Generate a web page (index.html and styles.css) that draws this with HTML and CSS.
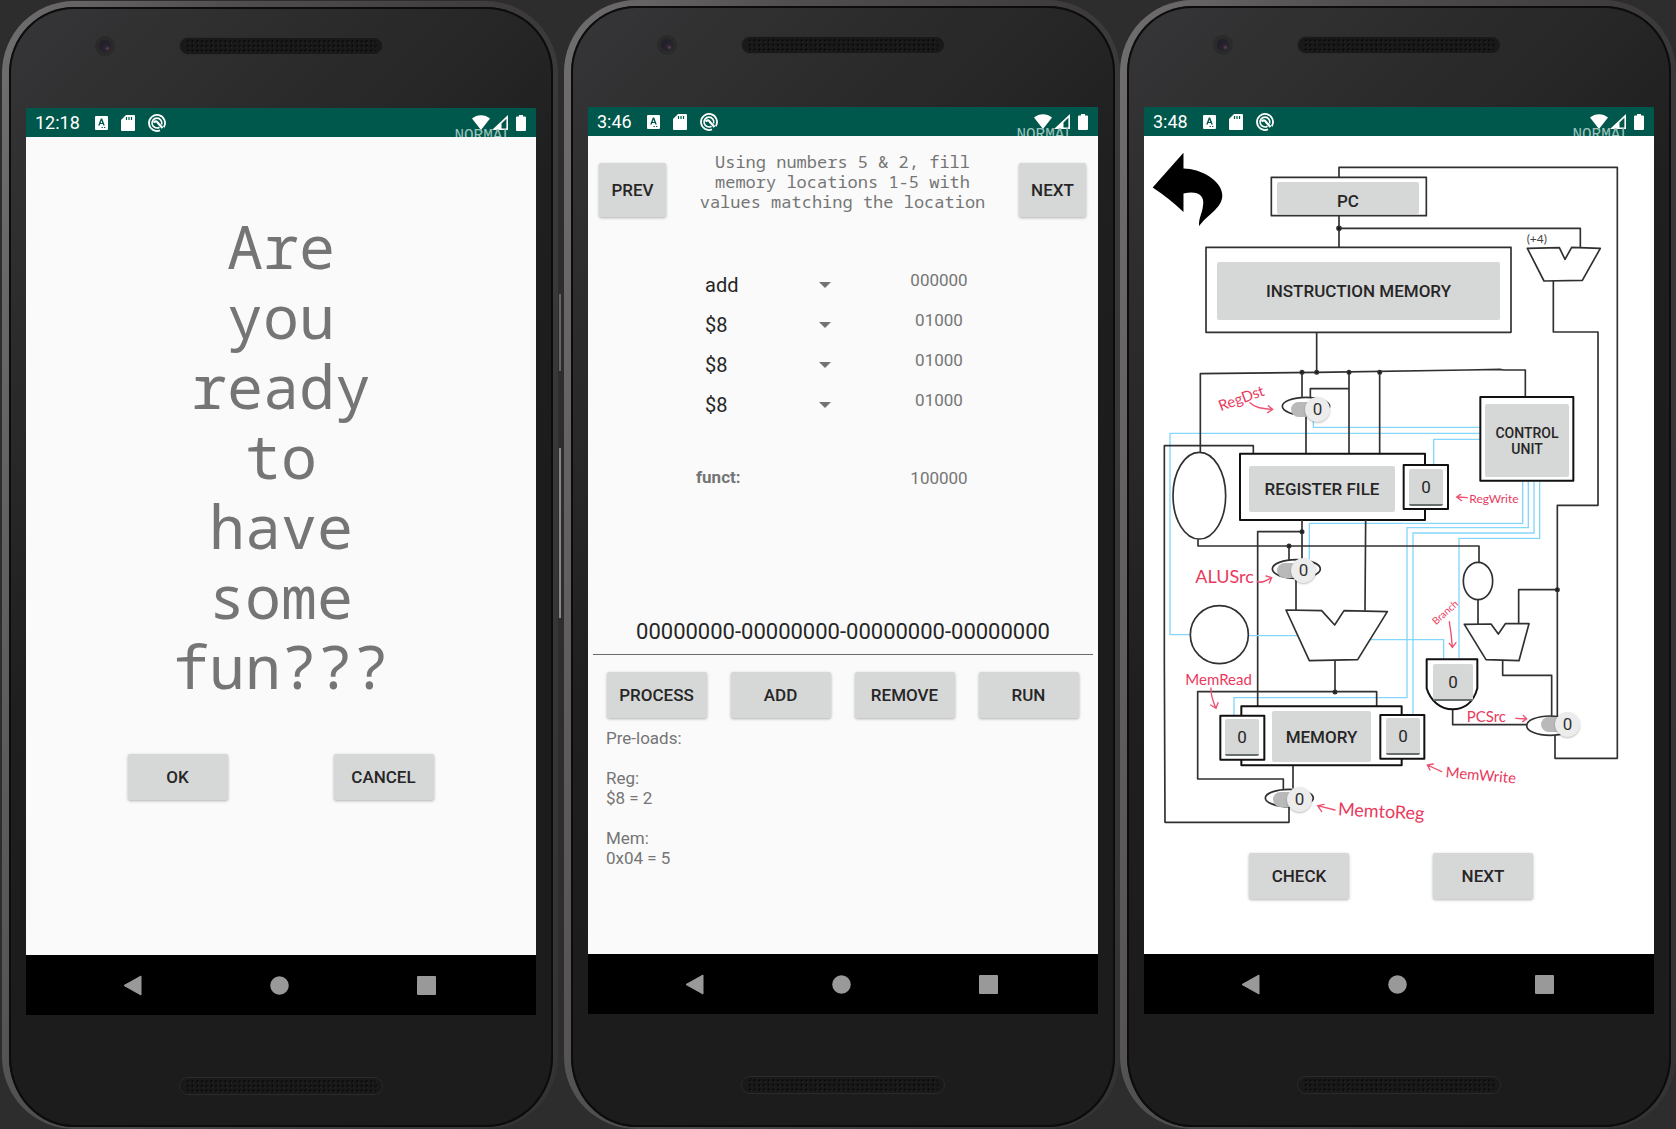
FILE: index.html
```html
<!DOCTYPE html>
<html lang="en">
<head>
<meta charset="utf-8">
<meta name="viewport" content="width=device-width, initial-scale=1">
<title>MIPS trainer</title>
<link rel="stylesheet" href="styles.css">
</head>
<body>
<svg class="defs" aria-hidden="true">
  <defs>
    <pattern id="holes" x="2" y="2" width="4.7" height="4.7" patternUnits="userSpaceOnUse">
      <circle cx="2.3" cy="2.3" r="1.2" fill="#060606"/>
      <circle cx="3.2" cy="3.3" r=".5" fill="#3c3c3c"/>
    </pattern>
    <symbol id="grille" viewBox="0 0 204 18">
      <rect x=".5" y=".5" width="203" height="17" rx="8.5" fill="#191919" stroke="#2b2b2b"/>
      <rect x="6" y="2" width="192" height="14" rx="6" fill="url(#holes)"/>
    </symbol>
    <symbol id="letter-a" viewBox="0 0 13 14">
      <path fill="#fff" fill-rule="evenodd" d="M1 0h11a1 1 0 0 1 1 1v12a1 1 0 0 1-1 1H1a1 1 0 0 1-1-1V1a1 1 0 0 1 1-1zM5.8 2.5 3.2 9.6h1.5l.5-1.500h2.600l.5 1.500h1.500L7.200 2.500zM6.500 4.500l.8 2.400H5.700zM6.500 11v1h1.300v-1zM9 11v1h1.300v-1z"/>
    </symbol>
    <symbol id="sd-card" viewBox="0 0 14 16">
      <path fill="#fff" d="M5 0h8a1 1 0 0 1 1 1v14a1 1 0 0 1-1 1H1a1 1 0 0 1-1-1V5z"/>
      <path stroke="#00574b" stroke-width="1.200" d="M5.500 2v3M8 2v3M10.500 2v3"/>
    </symbol>
    <symbol id="sync-ring" viewBox="0 0 18 18">
      <g fill="none" stroke="#fff">
        <path stroke-width="1.800" d="M12 16.400A8 8 0 1 1 15.800 13.200"/>
        <path stroke-width="1.600" d="M11.500 13.200A4.900 4.900 0 1 1 13.600 10.500"/>
        <path stroke-width="2.200" d="M5.500 8.500Q8.500 6 10 9L14.500 14"/>
      </g>
    </symbol>
    <symbol id="wifi" viewBox="0 0 18 15"><path fill="#fff" d="M9 15 0 3.500C5-1 13-1 18 3.500z"/></symbol>
    <symbol id="signal" viewBox="0 0 16 15"><path fill="#fff" d="M16 0v15H0zM14.400 3.800 9.500 8.500v5h4.900z" fill-rule="evenodd"/></symbol>
    <symbol id="battery" viewBox="0 0 10 16"><path fill="#fff" d="M3 0h4v1.500h2a1 1 0 0 1 1 1V15a1 1 0 0 1-1 1H1a1 1 0 0 1-1-1V2.500a1 1 0 0 1 1-1h2z"/></symbol>
    <symbol id="nav-back" viewBox="0 0 19 21"><path fill="#999" stroke="#999" stroke-linejoin="round" d="M18 1v19L1 10.500z"/></symbol>
    <symbol id="nav-home" viewBox="0 0 19 21"><circle cx="9.500" cy="10.500" r="9.300" fill="#999"/></symbol>
    <symbol id="nav-recent" viewBox="0 0 19 21"><rect y="1" width="19" height="19" rx="1" fill="#999"/></symbol>
  </defs>
</svg>

<main class="stage">
  <section class="phone phone--intro">
    <div class="forehead"><span class="camera"></span><svg class="grille"><use href="#grille"/></svg></div>
    <div class="screen">
      <header class="status">
        <time class="clock">12:18</time>
        <svg width="13" height="14"><use href="#letter-a"/></svg>
        <svg width="14" height="16"><use href="#sd-card"/></svg>
        <svg width="18" height="18"><use href="#sync-ring"/></svg>
        <span class="status-right">
          <svg width="18" height="15"><use href="#wifi"/></svg>
          <svg width="16" height="15"><use href="#signal"/></svg>
          <svg class="battery" width="10" height="16"><use href="#battery"/></svg>
        </span>
        <span class="mode">NORMAL</span>
      </header>
      <div class="app">
        <h1 class="headline">Are<br>you<br>ready<br>to<br>have<br>some<br>fun???</h1>
        <div class="choices">
          <button class="btn" type="button">OK</button>
          <button class="btn" type="button">CANCEL</button>
        </div>
      </div>
      <nav class="navbar">
        <button type="button" aria-label="Back"><svg><use href="#nav-back"/></svg></button>
        <button type="button" aria-label="Home"><svg><use href="#nav-home"/></svg></button>
        <button type="button" aria-label="Recent apps"><svg><use href="#nav-recent"/></svg></button>
      </nav>
    </div>
    <div class="chin"><svg class="grille"><use href="#grille"/></svg></div>
  </section>

  <section class="phone phone--editor">
    <div class="forehead"><span class="camera"></span><svg class="grille"><use href="#grille"/></svg></div>
    <div class="screen">
      <header class="status">
        <time class="clock">3:46</time>
        <svg width="13" height="14"><use href="#letter-a"/></svg>
        <svg width="14" height="16"><use href="#sd-card"/></svg>
        <svg width="18" height="18"><use href="#sync-ring"/></svg>
        <span class="status-right">
          <svg width="18" height="15"><use href="#wifi"/></svg>
          <svg width="16" height="15"><use href="#signal"/></svg>
          <svg class="battery" width="10" height="16"><use href="#battery"/></svg>
        </span>
        <span class="mode">NORMAL</span>
      </header>
      <div class="app">
        <div class="task">
          <button class="btn btn--step" type="button">PREV</button>
          <p class="prompt">Using numbers 5 &amp; 2, fill<br>memory locations 1-5 with<br>values matching the location</p>
          <button class="btn btn--step" type="button">NEXT</button>
        </div>
        <div class="fields">
          <select class="spinner" aria-label="Operation"><option>add</option><option>sub</option></select>
          <output class="bits">000000</output>
          <select class="spinner" aria-label="First register"><option>$8</option><option>$9</option></select>
          <output class="bits">01000</output>
          <select class="spinner" aria-label="Second register"><option>$8</option><option>$9</option></select>
          <output class="bits">01000</output>
          <select class="spinner" aria-label="Destination register"><option>$8</option><option>$9</option></select>
          <output class="bits">01000</output>
          <label class="funct" for="funct">funct:</label>
          <output class="bits bits--funct" id="funct">100000</output>
        </div>
        <input class="word" type="text" aria-label="Machine word" value="00000000-00000000-00000000-00000000">
        <div class="actions">
          <button class="btn" type="button">PROCESS</button>
          <button class="btn" type="button">ADD</button>
          <button class="btn" type="button">REMOVE</button>
          <button class="btn" type="button">RUN</button>
        </div>
        <p class="preloads">Pre-loads:<br><br>Reg:<br>$8 = 2<br><br>Mem:<br>0x04 = 5</p>
      </div>
      <nav class="navbar">
        <button type="button" aria-label="Back"><svg><use href="#nav-back"/></svg></button>
        <button type="button" aria-label="Home"><svg><use href="#nav-home"/></svg></button>
        <button type="button" aria-label="Recent apps"><svg><use href="#nav-recent"/></svg></button>
      </nav>
    </div>
    <div class="chin"><svg class="grille"><use href="#grille"/></svg></div>
  </section>

  <section class="phone phone--datapath">
    <div class="forehead"><span class="camera"></span><svg class="grille"><use href="#grille"/></svg></div>
    <div class="screen">
      <header class="status">
        <time class="clock">3:48</time>
        <svg width="13" height="14"><use href="#letter-a"/></svg>
        <svg width="14" height="16"><use href="#sd-card"/></svg>
        <svg width="18" height="18"><use href="#sync-ring"/></svg>
        <span class="status-right">
          <svg width="18" height="15"><use href="#wifi"/></svg>
          <svg width="16" height="15"><use href="#signal"/></svg>
          <svg class="battery" width="10" height="16"><use href="#battery"/></svg>
        </span>
        <span class="mode">NORMAL</span>
      </header>
      <div class="app app--white">
        <div class="datapath">
          <svg class="wires" viewBox="12 18 1530 2070">
            <!-- program counter, instruction memory, +4 adder -->
            <g class="ink">
              <rect x="394" y="142" width="465" height="115"/>
              <path d="M597 142V112H1432V1885H1245V1815M597 257V352M597 295H1321V352"/>
              <path d="M1162 355 1258 353 1275 388 1295 352 1381 355 1327 451 1212 453Z"/>
              <rect x="198" y="352" width="915" height="255"/>
              <path d="M530 607V727M1240 453V606H1374V1126H1252V1760"/>
              <circle class="dot" cx="597" cy="295" r="6"/>
            </g>
            <text class="note note--ink" x="1160" y="339">(+4)</text>

            <g transform="translate(0 690)">
              <g class="signal">
                <path d="M520 180V202H1020M1020 220H90V824H152M881 312V238H1020"/>
                <path d="M1148 365V490H508V597M1165 365V503H801V1013H282V1065M1182 365V519H819V1063M1199 365V535H957V895"/>
              </g>
              <g class="ink">
                <path d="M181 277V41L530 37 980 30 1080 28 1090 30H1156V110M486 37V112M511 112V86H627M627 37V280M719 37V280M498 160V280"/>
                <ellipse cx="498" cy="139" rx="71" ry="27"/>
                <ellipse cx="178" cy="407" rx="79" ry="130"/>
                <path d="M340 280V257H73V900L75 1387H447V1340"/>
                <path class="bold" d="M855 315V281H300V480H855V447"/>
                <path d="M174 538V558H1017V607M447 558V600M486 480V597M486 515H353V1039M677 480 675 752M468 655V750"/>
                <ellipse cx="469" cy="627" rx="72" ry="28"/>
                <ellipse cx="1014" cy="663" rx="44" ry="56"/>
                <path d="M1014 719V793M1252 689H1136V790"/>
                <rect class="bold" x="1021" y="111" width="279" height="251"/>
                <rect class="bold" x="791" y="315" width="133" height="132"/>
                <circle class="dot" cx="486" cy="37" r="5"/><circle class="dot" cx="530" cy="37" r="5"/>
                <circle class="dot" cx="627" cy="37" r="5"/><circle class="dot" cx="719" cy="37" r="5"/>
                <circle class="dot" cx="486" cy="515" r="5"/><circle class="dot" cx="447" cy="558" r="5"/>
                <circle class="dot" cx="1252" cy="689" r="5"/>
              </g>
              <g class="red">
                <path d="M330 128C345 142 360 146 398 148M385 137 398 148 383 158M982 413 952 411M962 403 950 411 965 422M352 664C367 672 380 660 395 653M378 648 395 653 388 669"/>
              </g>
              <text class="note note--m" transform="translate(242 154) rotate(-20)">RegDst</text>
              <text class="note note--s" x="988" y="430">RegWrite</text>
              <text class="note note--l" x="166" y="668">ALUSrc</text>
            </g>

            <g transform="translate(0 1380)">
              <g class="signal"><path d="M325 137H472M690 149H911V207"/></g>
              <g class="ink">
                <circle cx="238" cy="134" r="87"/>
                <path d="M438 60 545 62 584 105 612 62 742 65 653 209 508 212Z"/>
                <path d="M585 212V305M710 349V305H173V567H430V600M459 526V595"/>
                <path class="bold" d="M304 377V349H785V375M304 509V526H785V507"/>
                <rect class="bold" x="241" y="377" width="132" height="132"/>
                <rect class="bold" x="721" y="375" width="132" height="131"/>
                <ellipse cx="448" cy="624" rx="72" ry="26"/>
                <path d="M973 103 1053 102 1075 132 1096 101 1167 101 1137 212 1038 209Z"/>
                <path d="M1088 212V256H1235V380M938 358V404H1160"/>
                <path class="bold" d="M860 208H1012V295C1000 340 970 358 938 358 900 358 870 330 860 295Z"/>
                <ellipse cx="1230" cy="407" rx="70" ry="29"/>
                <circle class="dot" cx="585" cy="306" r="5"/>
              </g>
              <g class="red">
                <path d="M213 294C212 320 222 340 228 355M212 345 228 355 234 338M928 95C932 120 935 145 937 170M928 160 937 172 948 158M1127 385 1160 387M1150 376 1160 387 1148 395M905 545 862 525M880 522 862 525 870 540M585 660 533 647M552 643 533 647 545 665"/>
              </g>
              <text class="note note--m" x="136" y="286">MemRead</text>
              <text class="note note--xs" transform="translate(888 106) rotate(-42)">Branch</text>
              <text class="note note--m" x="980" y="395">PCSrc</text>
              <text class="note note--m" transform="translate(916 562) rotate(5)">MemWrite</text>
              <text class="note note--l" transform="translate(593 676) rotate(3)">MemtoReg</text>
            </g>
          </svg>

          <button class="back" type="button" aria-label="Back">
            <svg viewBox="36 66 212 224"><path d="M130 68 38 172Q88 205 130 245V190C165 181 196 190 188 228 186 250 174 265 177 288 197 255 246 235 246 195 245 150 180 115 130 115Z"/></svg>
          </button>

          <button class="unit unit--pc" type="button">PC</button>
          <button class="unit unit--im" type="button">INSTRUCTION MEMORY</button>
          <button class="unit unit--control" type="button">CONTROL UNIT</button>
          <button class="unit unit--reg" type="button">REGISTER FILE</button>
          <button class="unit unit--mem" type="button">MEMORY</button>

          <button class="unit toggle toggle--regwrite" type="button" aria-label="RegWrite">0</button>
          <button class="unit toggle toggle--branch" type="button" aria-label="Branch">0</button>
          <button class="unit toggle toggle--memread" type="button" aria-label="MemRead">0</button>
          <button class="unit toggle toggle--memwrite" type="button" aria-label="MemWrite">0</button>

          <label class="switch switch--regdst"><input type="checkbox" aria-label="RegDst"><span class="thumb">0</span></label>
          <label class="switch switch--alusrc"><input type="checkbox" aria-label="ALUSrc"><span class="thumb">0</span></label>
          <label class="switch switch--pcsrc"><input type="checkbox" aria-label="PCSrc"><span class="thumb">0</span></label>
          <label class="switch switch--memtoreg"><input type="checkbox" aria-label="MemtoReg"><span class="thumb">0</span></label>
        </div>
        <div class="verify">
          <button class="btn" type="button">CHECK</button>
          <button class="btn" type="button">NEXT</button>
        </div>
      </div>
      <nav class="navbar">
        <button type="button" aria-label="Back"><svg><use href="#nav-back"/></svg></button>
        <button type="button" aria-label="Home"><svg><use href="#nav-home"/></svg></button>
        <button type="button" aria-label="Recent apps"><svg><use href="#nav-recent"/></svg></button>
      </nav>
    </div>
    <div class="chin"><svg class="grille"><use href="#grille"/></svg></div>
  </section>
</main>
</body>
</html>
```
FILE: styles.css
```css
* { box-sizing: border-box; }

body {
  margin: 0;
  background: #2d2d2d;
  font-family: Roboto, "Liberation Sans", sans-serif;
  font-size: 17px;
  line-height: 20px;
  color: #757575;
}

button, input, select { font: inherit; }
svg { display: block; }
.defs { position: absolute; width: 0; height: 0; }

.stage {
  display: grid;
  grid-template-columns: repeat(3, minmax(0, 1fr));
  padding-left: 8px;
  min-height: 100vh;
}

/* handset */
.phone {
  position: relative;
  display: flex;
  flex-direction: column;
  padding: 0 17px;
  border: solid transparent;
  border-width: 6px 5px 2px 7px;
  border-radius: 72px;
  background:
    linear-gradient(135deg, #363639 0, #2e2e2e 15%, #262626 31%, #1f1f1f 42%, #1c1c1c 60%) padding-box,
    linear-gradient(100deg, #706e6e 0, #504e4e 30%, #3c3a3a 70%, #343232 100%) border-box;
  box-shadow: inset 0 0 0 2px #0c0c0c;
}
.phone--intro { margin: 1px 6px 0 -6px; }
.phone--intro::before,
.phone--intro::after {
  content: "";
  position: absolute;
  right: -8px;
  width: 2px;
  background: #8a8888;
}
.phone--intro::before { top: 287px; height: 77px; background: #666464; }
.phone--intro::after { top: 441px; height: 170px; }

.forehead {
  position: relative;
  height: 101px;
  padding-top: 30px;
}
.chin { height: 113px; padding-top: 62px; }
.phone--intro .chin { height: 112px; }
.grille { width: 204px; height: 18px; margin: 0 auto; }
.camera {
  position: absolute;
  left: 69px;
  top: 29px;
  width: 20px;
  height: 20px;
  border: 4px solid #2a2a2b;
  border-radius: 50%;
  background: radial-gradient(circle at 70% 70%, #6a4452 0, #29242f 20%, #1d1b24 100%);
}

.screen { flex: 1; display: flex; flex-direction: column; }
.app { flex: 1; background: #fafafa; }
.app--white { background: #fff; }

/* Android status bar */
.status {
  position: relative;
  display: flex;
  align-items: center;
  height: 29px;
  padding: 0 10px 0 9px;
  overflow: hidden;
  background: #00574b;
  color: #fff;
}
.clock { margin-right: 15px; font-size: 18px; }
.status > svg { margin-right: 13px; }
.status-right { display: flex; align-items: center; gap: 2px; margin-left: auto; }
.battery { margin-left: 6px; }
.mode {
  position: absolute;
  right: 24px;
  top: 18px;
  font-family: "Liberation Mono", monospace;
  font-size: 16px;
  color: #9cc2bb;
}

.navbar {
  display: flex;
  justify-content: center;
  align-items: center;
  gap: 128px;
  height: 60px;
  padding-right: 3px;
  background: #000;
}
.navbar button { padding: 0; border: 0; background: none; }
.navbar svg { width: 19px; height: 21px; }

/* buttons */
.btn {
  width: 100px;
  height: 46px;
  padding: 0;
  border: 0;
  border-radius: 2px;
  background: #d6d7d7;
  box-shadow: 0 1px 3px rgba(0, 0, 0, .3);
  color: #262626;
  font-weight: 500;
}
.btn--step { flex: none; width: 67px; height: 54px; }

/* intro screen */
.headline {
  margin: 0;
  padding-top: 74px;
  font: 400 60px/70px "Droid Sans Mono", "Noto Sans Mono", "DejaVu Sans Mono", monospace;
  text-align: center;
}
.choices { display: flex; justify-content: center; gap: 106px; margin-top: 53px; padding-right: 1px; }

/* instruction editor */
.task {
  display: flex;
  align-items: flex-start;
  padding: 16px 12px 0 11px;
}
.task .btn { margin-top: 11px; }
.prompt {
  flex: 1;
  margin: 0;
  font-family: "Droid Sans Mono", "Noto Sans Mono", "DejaVu Sans Mono", monospace;
  text-align: center;
}
.fields {
  display: grid;
  grid-template-columns: 147px 192px;
  grid-auto-rows: 40px;
  padding: 48px 0 0 108px;
}
.spinner {
  appearance: none;
  padding: 0 9px;
  border: 0;
  background: url("data:image/svg+xml,%3Csvg xmlns='http://www.w3.org/2000/svg' width='12' height='6'%3E%3Cpath fill='%23737373' d='M0 0h12L6 6z'/%3E%3C/svg%3E") no-repeat right 12px center;
  color: #262626;
  font-size: 20px;
}
.bits { line-height: 30px; text-align: center; }
.funct { margin-top: 33px; line-height: 38px; font-weight: 700; }
.bits--funct { margin-top: 33px; line-height: 40px; }
.word {
  display: block;
  width: calc(100% - 10px);
  height: 46px;
  margin: 144px 5px 0;
  padding: 0;
  border: 0;
  border-bottom: 1px solid #6b6b6b;
  background: none;
  color: #262626;
  font-size: 22px;
  text-align: center;
}
.actions { display: flex; justify-content: center; gap: 24px; margin-top: 17px; padding-right: 1px; }
.preloads { margin: 10px 0 0; padding-left: 18px; }

/* datapath diagram: units sit on a free canvas over the wiring */
.datapath { position: relative; width: 510px; height: 690px; }
.wires { width: 510px; height: 690px; }
.ink { fill: none; stroke: #303030; stroke-width: 5; stroke-linejoin: round; }
.ink .bold { stroke: #111; stroke-width: 6; }
.ink .dot { fill: #111; }
.signal { fill: none; stroke: #84d6fa; stroke-width: 4; }
.red { fill: none; stroke: #ee5070; stroke-width: 4; stroke-linecap: round; }
.note { font-family: Lato, sans-serif; fill: #e93a5e; }
.note--xs { font-size: 30px; }
.note--s { font-size: 36px; }
.note--m { font-size: 45px; }
.note--l { font-size: 54px; }
.note--ink { font-size: 36px; fill: #444; }

.back {
  position: absolute;
  left: 8px;
  top: 16px;
  width: 71px;
  height: 75px;
  padding: 0;
  border: 0;
  background: none;
}
.back svg { width: 71px; height: 75px; }

.unit {
  position: absolute;
  padding: 0;
  border: 0;
  border-radius: 2px;
  background: #d6d7d7;
  color: #262626;
  font-weight: 500;
}
.unit--pc { left: 133px; top: 46px; width: 142px; height: 32px; padding-top: 6px; }
.unit--im { left: 73px; top: 126px; width: 283px; height: 58px; }
.unit--control { left: 341px; top: 268px; width: 84px; height: 73px; padding: 0 10px; font-size: 14px; line-height: 16px; }
.unit--reg { left: 105px; top: 330px; width: 146px; height: 46px; }
.unit--mem { left: 128px; top: 575px; width: 99px; height: 51px; }

.toggle { width: 34px; height: 37px; border-bottom: 2px solid #68706c; font-weight: 400; }
.toggle--regwrite { left: 265px; top: 333px; }
.toggle--branch { left: 289px; top: 528px; width: 40px; }
.toggle--memread { left: 81px; top: 583px; }
.toggle--memwrite { left: 242px; top: 582px; }

.switch { position: absolute; width: 39px; height: 25px; }
.switch input {
  position: absolute;
  left: 0;
  top: 5px;
  width: 28px;
  height: 15px;
  margin: 0;
  appearance: none;
  border-radius: 8px;
  background: #b9b9b9;
}
.thumb {
  position: absolute;
  right: 0;
  top: 0;
  width: 25px;
  height: 25px;
  border-radius: 50%;
  background: #ececec;
  box-shadow: 0 1px 2px rgba(0, 0, 0, .25);
  color: #333;
  line-height: 25px;
  text-align: center;
}
.switch--regdst { left: 147px; top: 261px; }
.switch--alusrc { left: 133px; top: 422px; }
.switch--pcsrc { left: 397px; top: 576px; }
.switch--memtoreg { left: 129px; top: 651px; }

.verify { display: flex; gap: 84px; margin-top: 27px; padding-left: 105px; }
```
